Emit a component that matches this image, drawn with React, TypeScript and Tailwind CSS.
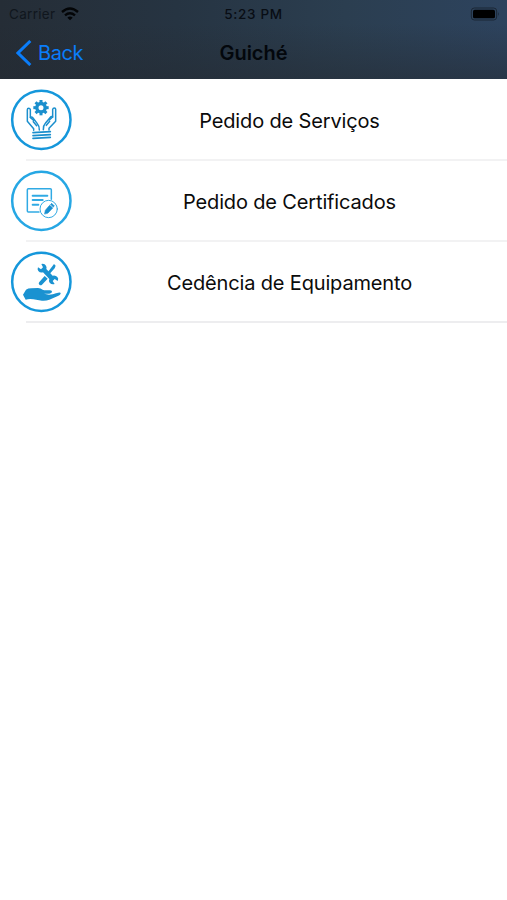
import type { ReactNode } from "react";

function Ring({ color, children }: { color: string; children: ReactNode }) {
  return (
    <svg viewBox="0 0 228 228" className="ml-1 mt-[2px] h-[76px] w-[76px] shrink-0" fill="none">
      <circle cx="112" cy="113.5" r="87.5" stroke={color} strokeWidth="7.5" />
      {children}
    </svg>
  );
}

function ServicesIcon() {
  const teeth = [0, 45, 90, 135, 180, 225, 270, 315];
  return (
    <Ring color="#1597db">
      <g stroke="#1b8fcd" strokeLinecap="round" strokeLinejoin="round">
        <circle cx="111" cy="77" r="12.5" strokeWidth="10" />
        {teeth.map((a) => (
          <path key={a} d="M111 60v-1.5" strokeWidth="9" strokeLinecap="square" transform={`rotate(${a} 111 77)`} />
        ))}
        <g strokeWidth="4.5">
          <path d="M89 145v-5L70 118V83q0-4 4-4t5 4v23l10 9" />
          <path d="M79 106q4-3 8 2l13 17q6 6 6 19" />
          <path d="M88 119l10 12" />
          <path d="M135 144v-5l20-21V82q0-4-4-4t-5 4v23l-10 9" />
          <path d="M146 105q-4-3-8 2l-14 17q-6 6-6 19" />
          <path d="M137 118l-10 12" />
          <path d="M87 152l52-3M87 161l52-3M87 169l52-3" strokeWidth="5" />
        </g>
      </g>
    </Ring>
  );
}

function CertificatesIcon() {
  return (
    <Ring color="#26a7e4">
      <g stroke="#30aae4" strokeLinecap="round" strokeLinejoin="round">
        <path d="M105 147H73q-3 0-3-3V80q0-3 3-3h66q3 0 3 3v29" strokeWidth="4.5" />
        <path d="M86 98h44M86 111h30M86 125h17" strokeWidth="6" />
        <circle cx="134" cy="138" r="26" fill="#fff" strokeWidth="3" />
        <path d="M122 152l2-10 13-15 9 8-14 15zM140 124l3-3 8 8-3 3z" fill="#168fd0" stroke="#168fd0" strokeWidth="2" />
      </g>
    </Ring>
  );
}

function EquipmentIcon() {
  return (
    <Ring color="#1597db">
      <g fill="#1a92d1">
        <path d="M57 152l9-15q6-4 16-4 8-1 20-1 8 0 14 5 4 2 10 2h12q7 0 6 5-1 4-8 5h-16l15 3q12 0 21-4 13-5 14-1 1 5-10 10l-24 10q-10 4-22 3l-26-4q-12-2-23 1z" />
        <path d="M112 60q10-2 14 5 3 5 1 10l19 20q9-2 14 4 5 5 1 12l-9-6-6 6 6 9q-9 3-15-4-4-5-1-11l-19-20q-9 2-14-4-4-5-1-11l9 6 6-6z" />
        <path d="M150 60l5 5-3 8-16 18-6-5 15-19z" />
        <path d="M122 96l9 8-17 18q-4 4-8 0t0-8z" />
      </g>
    </Ring>
  );
}

function Row({ icon, children }: { icon: ReactNode; children: ReactNode }) {
  return (
    <li className="group flex h-[81px]">
      {icon}
      <div className="-ml-[54px] flex flex-1 items-center justify-center border-b-2 border-[#f2f2f3] pl-[46px] pt-[2px] text-[20px] tracking-[-0.15px] text-[#0b0b0b] group-last:border-[#ededef]">
        {children}
      </div>
    </li>
  );
}

export default function App() {
  return (
    <div className="h-[900px] w-[507px] overflow-hidden bg-white font-['Inter','Liberation_Sans',sans-serif]">
      <header className="h-[79px] bg-[linear-gradient(180deg,rgba(36,42,50,0)_30%,rgba(36,42,50,0.5)_100%),linear-gradient(90deg,#252d36_0%,#263442_35%,#2b3e50_68%,#2d435e_100%)]">
        <div className="grid h-7 grid-cols-3 items-center pl-[9px] pr-[7px] text-[13.5px] text-[#080d14]">
          <div className="flex items-center gap-[6px]">
            <span className="tracking-[0.3px] text-[#10161d]">Carrier</span>
            <svg viewBox="0 0 54 42" className="h-[14px] w-[18px]" fill="none" stroke="#030507" strokeWidth="7">
              <path d="M3 15q24-21 48 0" />
              <path d="M12 25q15-13 30 0" />
              <path d="M19 32q8-7 16 0l-8 8z" fill="#030507" stroke="none" />
            </svg>
          </div>
          <span className="pr-[2px] text-center font-medium tracking-[0.65px]">5:23 PM</span>
          <svg viewBox="0 0 90 42" className="h-[14px] w-[30px] justify-self-end" fill="none">
            <rect x="4" y="3" width="76" height="36" rx="9" stroke="#1b2735" strokeWidth="3" />
            <rect x="9" y="8" width="66" height="26" rx="5" fill="#000" />
            <path d="M84 15q5 6 0 12z" fill="#1b2735" />
          </svg>
        </div>
        <div className="grid h-[49px] grid-cols-[1fr_auto_1fr] items-center pl-4 pr-4">
          <div className="flex items-center gap-[6px] text-[20px] tracking-[-0.4px] text-[#0a7dfa]">
            <svg viewBox="0 0 48 78" className="h-[26px] w-4" fill="none" stroke="#0a7dfa" strokeWidth="9">
              <path d="M43 3L6 39l37 36" />
            </svg>
            <span>Back</span>
          </div>
          <h1 className="text-[20px] font-semibold text-[#03070c]">Guiché</h1>
        </div>
      </header>
      <ul className="pt-px">
        <Row icon={<ServicesIcon />}>Pedido de Serviços</Row>
        <Row icon={<CertificatesIcon />}>Pedido de Certificados</Row>
        <Row icon={<EquipmentIcon />}>Cedência de Equipamento</Row>
      </ul>
    </div>
  );
}
